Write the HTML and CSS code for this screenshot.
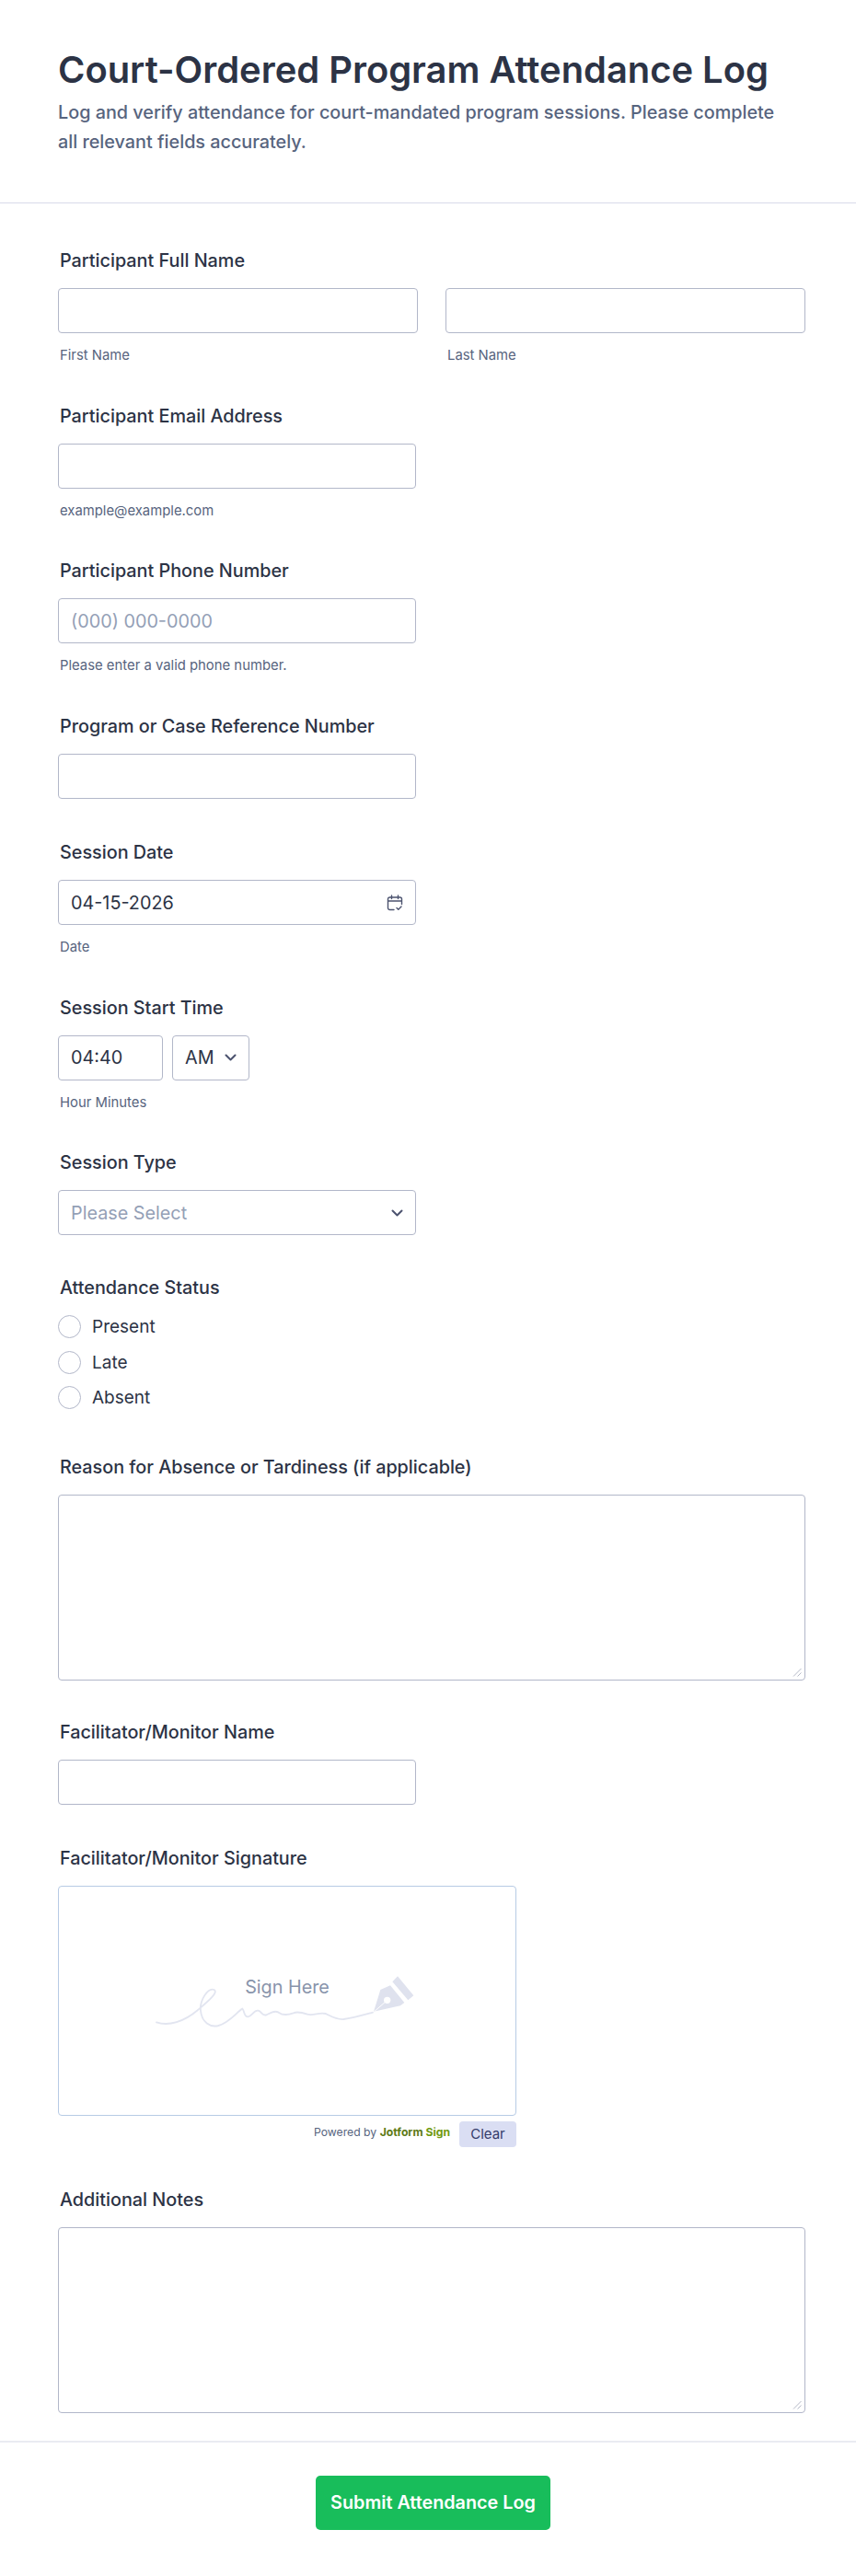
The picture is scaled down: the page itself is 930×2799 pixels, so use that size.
FILE: index.html
```html
<!DOCTYPE html>
<html lang="en">
<head>
<meta charset="utf-8">
<title>Court-Ordered Program Attendance Log</title>
<link rel="stylesheet" href="styles.css">
</head>
<body>
<form class="form">
  <header class="header">
    <h1 class="title">Court-Ordered Program Attendance Log</h1>
    <p class="subtitle">Log and verify attendance for court-mandated program sessions. Please complete all relevant fields accurately.</p>
  </header>
  <div class="fields">
    <div class="field f-sub">
      <div class="label">Participant Full Name</div>
      <div class="name-row">
        <div class="name-col"><div class="input wide"></div><div class="sub">First Name</div></div>
        <div class="name-col"><div class="input wide"></div><div class="sub">Last Name</div></div>
      </div>
    </div>
    <div class="field f-sub">
      <div class="label">Participant Email Address</div>
      <div class="input"></div>
      <div class="sub">example@example.com</div>
    </div>
    <div class="field f-sub">
      <div class="label">Participant Phone Number</div>
      <div class="input placeholder">(000) 000-0000</div>
      <div class="sub">Please enter a valid phone number.</div>
    </div>
    <div class="field f-plain">
      <div class="label">Program or Case Reference Number</div>
      <div class="input"></div>
    </div>
    <div class="field f-sub">
      <div class="label">Session Date</div>
      <div class="input value between">04-15-2026
        <svg class="icon-cal" viewBox="0 0 18 18" fill="none" stroke="#4c536f" stroke-width="1.4" stroke-linecap="round" stroke-linejoin="round"><path d="M8 16.500H3.500A2 2 0 0 1 1.500 14.500V5A2 2 0 0 1 3.500 3H14.500A2 2 0 0 1 16.500 5V10.500M1.500 7H16.500M5.500 1V4.500M12.500 1V4.500M11 14.500L12.800 16.200L16 13"/></svg>
      </div>
      <div class="sub">Date</div>
    </div>
    <div class="field f-sub">
      <div class="label">Session Start Time</div>
      <div class="time-row">
        <div class="input value time">04:40</div>
        <div class="input ampm">AM
          <svg class="chev" viewBox="0 0 13 8" fill="none" stroke="#4c536f" stroke-width="2" stroke-linecap="round" stroke-linejoin="round"><path d="M1.500 1.500L6.500 6.500L11.500 1.500"/></svg>
        </div>
      </div>
      <div class="sub">Hour Minutes</div>
    </div>
    <div class="field f-type">
      <div class="label">Session Type</div>
      <div class="input placeholder between">Please Select
        <svg class="chev" viewBox="0 0 13 8" fill="none" stroke="#4c536f" stroke-width="2" stroke-linecap="round" stroke-linejoin="round"><path d="M1.500 1.500L6.500 6.500L11.500 1.500"/></svg>
      </div>
    </div>
    <div class="field f-status">
      <div class="label">Attendance Status</div>
      <div class="radios">
        <div class="radio"><span class="dot"></span>Present</div>
        <div class="radio"><span class="dot"></span>Late</div>
        <div class="radio"><span class="dot"></span>Absent</div>
      </div>
    </div>
    <div class="field f-reason">
      <div class="label">Reason for Absence or Tardiness (if applicable)</div>
      <div class="input area">
        <svg class="grip" viewBox="0 0 10 10" fill="none" stroke="#b4b8c6" stroke-width="1"><path d="M9.500 1L1 9.500M9.500 5.500L5.500 9.500"/></svg>
      </div>
    </div>
    <div class="field f-plain-b">
      <div class="label">Facilitator/Monitor Name</div>
      <div class="input"></div>
    </div>
    <div class="field f-sig">
      <div class="label">Facilitator/Monitor Signature</div>
      <div class="sig-wrap">
        <div class="sig-pad">
          <svg class="sig-art" viewBox="0 0 960 330" fill="none">
            <path d="M60 232C100 246 150 230 195 192C230 162 262 135 248 126C228 118 200 160 204 195C208 232 235 250 262 243C300 232 322 198 340 188C348 196 344 214 358 214C372 212 378 190 392 194C404 198 404 212 418 208C432 202 444 192 458 200C472 210 490 208 506 202C520 196 534 200 552 206C572 212 590 198 612 204C632 214 646 224 670 222C700 218 735 208 765 200" stroke="#e2e5f0" stroke-width="5.500" stroke-linecap="round"/>
            <path d="M768 197L790 126L822 112L868 168L855 178Z" fill="#dfe2ee"/>
            <path d="M829 100L846 82L898 145L880 160Z" fill="#dfe2ee"/>
            <circle cx="812" cy="160" r="11" fill="#fff"/>
            <path d="M770 197L810 162" stroke="#fff" stroke-width="3"/>
          </svg>
          <span class="sig-text">Sign Here</span>
        </div>
        <div class="sig-foot">
          <span class="powered">Powered by <b class="brand">Jotform <span class="brand-sign">Sign</span></b></span>
          <span class="clear">Clear</span>
        </div>
      </div>
    </div>
    <div class="field">
      <div class="label">Additional Notes</div>
      <div class="input area tall">
        <svg class="grip" viewBox="0 0 10 10" fill="none" stroke="#b4b8c6" stroke-width="1"><path d="M9.500 1L1 9.500M9.500 5.500L5.500 9.500"/></svg>
      </div>
    </div>
  </div>
  <footer class="footer">
    <div class="submit">Submit Attendance Log</div>
  </footer>
</form>
</body>
</html>
```
FILE: styles.css
```css
* { box-sizing: border-box; }
html, body { margin: 0; padding: 0; background: #fff; }
body { font-family: Inter, "Liberation Sans", sans-serif; color: #2c3345; }
.form { width: 930px; height: 2799px; display: flex; flex-direction: column; }
.header { height: 221px; padding: 51px 63px 0; border-bottom: 1px solid #d8dae9; }
.title { margin: 0; font-size: 39.9px; line-height: 50px; font-weight: 600; color: #2c3345; }
.subtitle { margin: 5px 0 0; width: 800px; font-size: 19.8px; line-height: 32px; font-weight: 500; color: #57647e; }
.fields { padding: 48px 55px 0 63px; height: 2431px; }
.f-sub { height: 168.6px; }
.f-plain { height: 137.4px; }
.f-type { height: 135.6px; }
.f-status { height: 195px; }
.f-reason { height: 288.5px; }
.f-plain-b { height: 137px; }
.f-sig { height: 370.5px; }
.label { font-size: 19.8px; line-height: 28px; height: 28px; font-weight: 500; color: #2c3345; padding-left: 2px; margin-bottom: 16px; white-space: nowrap; }
.input { width: 389px; height: 49px; background: #fff; border: 1px solid #b2b7c9; border-radius: 4px; display: flex; align-items: center; padding: 0 13px; font-size: 19.8px; }
.input.wide { width: 391px; }
.placeholder { color: #94a0b6; }
.value { color: #2c3345; }
.between { justify-content: space-between; }
.sub { font-size: 14.85px; line-height: 18px; color: #57647e; padding-left: 2px; margin-top: 15px; }
.name-row { display: flex; gap: 30px; }
.time-row { display: flex; gap: 10px; }
.time { width: 114px; }
.ampm { width: 84px; padding: 0 13px 0 13px; justify-content: space-between; color: #2c3345; }
.icon-cal { width: 18px; height: 18px; }
.chev { width: 13px; height: 8px; }
.radios { display: flex; flex-direction: column; gap: 12.5px; margin-top: 2px; }
.radio { display: flex; align-items: center; gap: 12px; height: 26px; font-size: 19px; line-height: 26px; padding-top: 1px; color: #2c3345; }
.dot { width: 25px; height: 25px; margin-top: -1px; border: 1px solid #b2b7c9; border-radius: 50%; background: #fff; }
.area { width: 812px; height: 202px; position: relative; }
.area.tall { height: 202.500px; }
.grip { position: absolute; right: 3px; bottom: 3px; width: 10px; height: 10px; }
.sig-wrap { width: 498px; }
.sig-pad { width: 498px; height: 250px; border: 1px solid #b7cbe5; border-radius: 4px; position: relative; }
.sig-art { position: absolute; left: 86px; top: 70px; width: 320px; height: 110px; }
.sig-text { position: absolute; left: 0; right: 0; top: 95px; text-align: center; font-size: 19.8px; line-height: 28px; color: #8894ab; }
.sig-foot { display: flex; justify-content: flex-end; align-items: flex-start; gap: 10px; margin-top: 6px; }
.powered { font-size: 12.2px; line-height: 16px; color: #57647e; margin-top: 4px; }
.brand { font-weight: 700; color: #5d7a17; }
.brand-sign { color: #6f9a10; }
.clear { width: 62px; height: 28px; background: #dadef3; border-radius: 4px; font-size: 15px; line-height: 28px; text-align: center; color: #343c6a; }
.footer { border-top: 2px solid #eaebf2; padding: 36px 0 0 11px; flex: 1; display: flex; justify-content: center; align-items: flex-start; }
.submit { width: 255px; height: 59px; background: #18bd5b; border-radius: 5px; color: #fff; font-size: 19.8px; font-weight: 600; line-height: 59px; text-align: center; white-space: nowrap; }
```
